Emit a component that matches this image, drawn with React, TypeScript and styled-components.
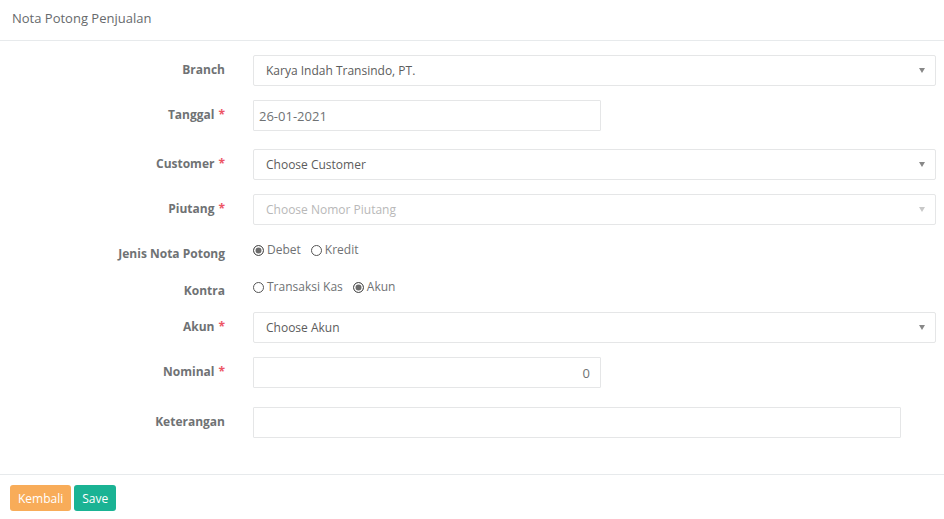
import React from "react";
import styled, { createGlobalStyle } from "styled-components";

const Global = createGlobalStyle`
  html, body { margin: 0; padding: 0; background: #fff; }
  body { font-family: "Open Sans", "Liberation Sans", sans-serif; color: #676a6c; }
  * { box-sizing: border-box; }
`;

const Page = styled.div`
  width: 944px;
  height: 519px;
  background: #fff;
  display: flex;
  flex-direction: column;
`;

const Header = styled.div`
  height: 41px;
  border-bottom: 1px solid #e7eaec;
  padding: 0 12px;
  display: flex;
  align-items: center;
  padding-bottom: 5px;
`;

const Title = styled.h5`
  margin: 0;
  font-size: 13px;
  font-weight: 400;
  color: #676a6c;
`;

const Form = styled.div`
  padding: 14px 8px 0 0;
  display: flex;
  flex-direction: column;
`;

const Row = styled.div<{ $mb: number; $h?: number }>`
  display: grid;
  grid-template-columns: 225px 1fr;
  column-gap: 28px;
  margin-bottom: ${(p) => p.$mb}px;
  height: ${(p) => (p.$h ? `${p.$h}px` : "auto")};
`;

const Label = styled.label<{ $pt: number }>`
  text-align: right;
  font-size: 12px;
  font-weight: 700;
  line-height: 18px;
  padding-top: ${(p) => p.$pt}px;
  color: #6f7274;
`;

const Req = styled.span`
  color: #ed5565;
  margin-left: 4px;
`;

const Select = styled.div<{ $disabled?: boolean }>`
  height: 31px;
  border: 1px solid #e5e6e7;
  border-radius: 2px;
  padding: 0 12px;
  display: flex;
  align-items: center;
  justify-content: space-between;
  font-size: 12px;
  color: ${(p) => (p.$disabled ? "#b8b8b8" : "#5c5c5c")};
  background: #fff;
`;

const Arrow = styled.span<{ $disabled?: boolean }>`
  width: 0;
  height: 0;
  border-left: 3.5px solid transparent;
  border-right: 3.5px solid transparent;
  border-top: 5px solid ${(p) => (p.$disabled ? "#c8c8c8" : "#888")};
  margin-right: -2px;
`;

const Input = styled.input<{ $w: number; $align?: string }>`
  width: ${(p) => p.$w}px;
  height: 31px;
  border: 1px solid #e5e6e7;
  border-radius: 1px;
  padding: 0 10px 0 5px;
  font-family: "Open Sans", "Liberation Sans", sans-serif;
  font-size: 13px;
  color: #6f7274;
  text-align: ${(p) => p.$align || "left"};
  outline: none;
  background: #fff;
`;

const RadioGroup = styled.div`
  display: flex;
  align-items: center;
  gap: 10px;
  padding-top: 2px;
  height: 20px;
`;

const RadioItem = styled.span`
  display: inline-flex;
  align-items: center;
  gap: 3px;
  font-size: 12px;
  line-height: 18px;
  color: #6f7274;
`;

const Circle = styled.span<{ $on?: boolean }>`
  width: 11px;
  height: 11px;
  border-radius: 50%;
  border: 1px solid #555;
  background: ${(p) => (p.$on ? "#6b6b6b" : "#fff")};
  box-shadow: ${(p) => (p.$on ? "inset 0 0 0 1.5px #fff" : "none")};
  display: inline-block;
`;

const Footer = styled.div`
  margin-top: auto;
  border-top: 1px solid #e7eaec;
  padding: 10px 10px 8px;
  display: flex;
  gap: 3px;
`;

const Button = styled.button<{ $bg: string }>`
  height: 26px;
  padding: 0 8px;
  border: none;
  border-radius: 3px;
  background: ${(p) => p.$bg};
  color: #fff;
  font-family: "Open Sans", "Liberation Sans", sans-serif;
  font-size: 12px;
  cursor: pointer;
`;

const Radio = ({ on, text }: { on?: boolean; text: string }) => (
  <RadioItem>
    <Circle $on={on} />
    {text}
  </RadioItem>
);

export default function App() {
  return (
    <Page>
      <Global />
      <Header>
        <Title>Nota Potong Penjualan</Title>
      </Header>
      <Form>
        <Row $mb={14}>
          <Label $pt={6}>Branch</Label>
          <Select>
            Karya Indah Transindo, PT.
            <Arrow />
          </Select>
        </Row>
        <Row $mb={18}>
          <Label $pt={6}>
            Tanggal<Req>*</Req>
          </Label>
          <Input $w={348} defaultValue="26-01-2021" readOnly />
        </Row>
        <Row $mb={14}>
          <Label $pt={6}>
            Customer<Req>*</Req>
          </Label>
          <Select>
            Choose Customer
            <Arrow />
          </Select>
        </Row>
        <Row $mb={14}>
          <Label $pt={6}>
            Piutang<Req>*</Req>
          </Label>
          <Select $disabled>
            Choose Nomor Piutang
            <Arrow $disabled />
          </Select>
        </Row>
        <Row $mb={0} $h={37}>
          <Label $pt={6}>Jenis Nota Potong</Label>
          <RadioGroup>
            <Radio on text="Debet" />
            <Radio text="Kredit" />
          </RadioGroup>
        </Row>
        <Row $mb={0} $h={36}>
          <Label $pt={6}>Kontra</Label>
          <RadioGroup>
            <Radio text="Transaksi Kas" />
            <Radio on text="Akun" />
          </RadioGroup>
        </Row>
        <Row $mb={14}>
          <Label $pt={6}>
            Akun<Req>*</Req>
          </Label>
          <Select>
            Choose Akun
            <Arrow />
          </Select>
        </Row>
        <Row $mb={19}>
          <Label $pt={6}>
            Nominal<Req>*</Req>
          </Label>
          <Input $w={348} $align="right" defaultValue="0" readOnly />
        </Row>
        <Row $mb={0}>
          <Label $pt={6}>Keterangan</Label>
          <Input $w={648} readOnly />
        </Row>
      </Form>
      <Footer>
        <Button $bg="#f8ac59">Kembali</Button>
        <Button $bg="#1ab394">Save</Button>
      </Footer>
    </Page>
  );
}
